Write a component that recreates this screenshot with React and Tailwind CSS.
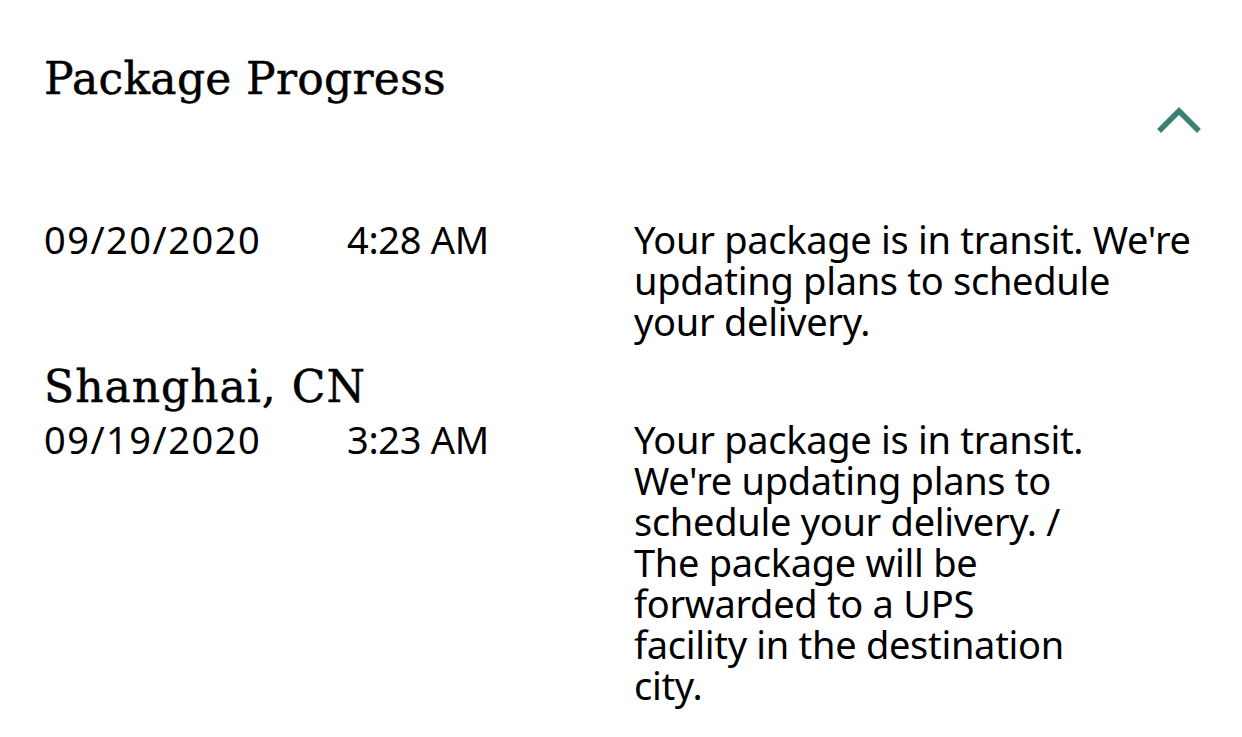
import React from 'react';

const serif = { fontFamily: '"DejaVu Serif", "Liberation Serif", serif' };
const sans = { fontFamily: '"Noto Sans", "Open Sans", sans-serif' };

const events = [
  {
    date: '09/20/2020',
    time: '4:28 AM',
    text: "Your package is in transit. We're updating plans to schedule your delivery.",
    width: 'max-w-[566px]',
  },
  {
    location: 'Shanghai, CN',
    date: '09/19/2020',
    time: '3:23 AM',
    text: "Your package is in transit. We're updating plans to schedule your delivery. / The package will be forwarded to a UPS facility in the destination city.",
    width: 'max-w-[456px]',
  },
];

const ChevronUp = () => (
  <svg width="44" height="30" viewBox="0 0 44 30" fill="none">
    <polyline
      points="4,25 22,7 40,25"
      stroke="#3b7f77"
      strokeWidth="5.5"
      strokeLinecap="square"
      strokeLinejoin="miter"
    />
  </svg>
);

export default function App() {
  return (
    <div className="min-h-screen bg-white text-black pl-[44px] pr-[42px] pt-[55px]">
      {/* Header */}
      <div className="flex items-start justify-between">
        <h1
          className="text-[44px] leading-[48px] font-normal tracking-[0.3px] [-webkit-text-stroke:0.5px_#000]"
          style={serif}
        >
          Package Progress
        </h1>
        <button className="mt-[49px] -mr-[1px]" aria-label="Collapse">
          <ChevronUp />
        </button>
      </div>

      {/* Timeline */}
      <div className="mt-[85px]">
        {events.map((ev, i) => (
          <div key={i} className={i > 0 ? 'mt-[21px]' : ''}>
            {ev.location && (
              <h2
                className="text-[44px] leading-[48px] font-normal tracking-[1px] [-webkit-text-stroke:0.5px_#000] mb-[8px]"
                style={serif}
              >
                {ev.location}
              </h2>
            )}
            <div
              className="grid grid-cols-[303px_287px_1fr] text-[38px] leading-[41px] tracking-[-0.3px]"
              style={sans}
            >
              <div className="tracking-[1.5px]">{ev.date}</div>
              <div>{ev.time}</div>
              <div className={ev.width}>{ev.text}</div>
            </div>
          </div>
        ))}
      </div>
    </div>
  );
}
